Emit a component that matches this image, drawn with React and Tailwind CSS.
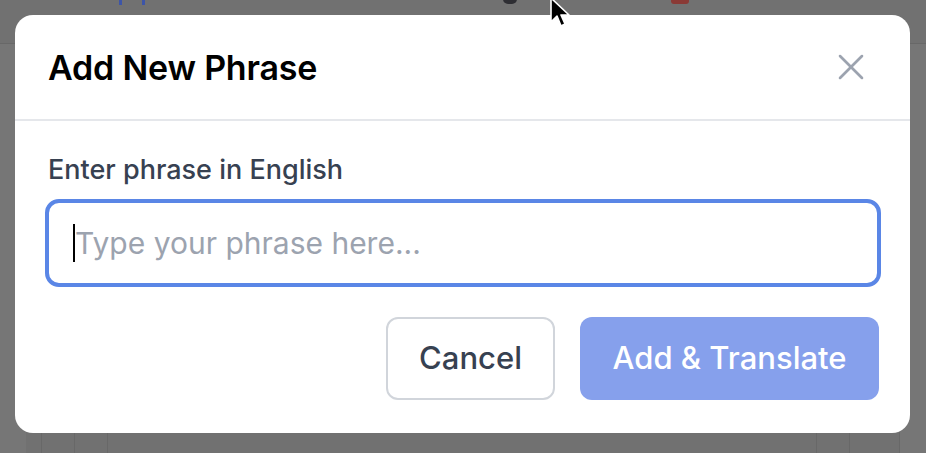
import React from 'react';
import { X } from 'lucide-react';

function Backdrop() {
  // faint page behind the overlay
  return (
    <div className="absolute inset-0 flex flex-col">
      <div className="h-[44px] border-b border-[#686868] relative">
        <div className="absolute left-[119px] top-0 w-[3px] h-[5px] bg-[#3d55a8]" />
        <div className="absolute left-[142px] top-0 w-[3px] h-[5px] bg-[#3d55a8]" />
        <div className="absolute left-[503px] -top-[6px] w-[14px] h-[10px] rounded-full bg-[#2e2e33]" />
        <div className="absolute left-[671px] -top-[4px] w-[18px] h-[8px] rounded-[3px] bg-[#8a3a36]" />
      </div>
      <div className="flex-1 flex">
        <div className="w-[26px] bg-[#767676]" />
        <div className="w-[16px] border-r border-[#686868]" />
        <div className="w-[33px] border-r border-[#686868]" />
        <div className="w-[33px] border-r border-[#686868]" />
        <div className="flex-1 border-r border-[#686868]" />
        <div className="w-[33px] border-r border-[#686868]" />
        <div className="w-[50px] border-r border-[#686868]" />
        <div className="w-[26px] bg-[#767676]" />
      </div>
    </div>
  );
}

function Pointer() {
  return (
    <svg className="absolute left-[548px] -top-[4px]" width="26" height="34" viewBox="0 0 26 34">
      <path d="M3 2 L3 26 L9 20 L13 30 L17 28 L13 19 L21 19 Z" fill="#000" stroke="#fff" strokeWidth="1.6" strokeLinejoin="round" />
    </svg>
  );
}

export default function App() {
  return (
    <div
      className="relative w-[926px] h-[453px] overflow-hidden bg-[#717171]"
      style={{ fontFamily: 'Inter, "Noto Sans", sans-serif' }}
    >
      <Backdrop />

      {/* Modal */}
      <div className="absolute left-[15px] top-[15px] w-[895px] h-[418px] bg-white rounded-[18px] flex flex-col">
        <div className="h-[106px] flex items-center justify-between pl-[33px] pr-[37px] border-b-2 border-[#e5e7eb]">
          <h2 className="text-[34px] font-semibold text-black tracking-[-0.2px]">Add New Phrase</h2>
          <button className="text-[#9ca3af]">
            <X size={44} strokeWidth={1.4} />
          </button>
        </div>

        <div className="pl-[30px] pr-[29px] pt-[32px]">
          <label className="block pl-[3px] text-[27px] leading-[34px] font-medium text-[#374151]">
            Enter phrase in English
          </label>
          <div className="mt-[12px] h-[88px] border-[4px] border-[#5a86e6] rounded-[14px] flex items-center pl-[24px]">
            <span className="w-[2px] h-[38px] bg-black" />
            <input
              className="flex-1 bg-transparent outline-none caret-transparent text-[30px] text-[#111827] placeholder:text-[#9ca3af]"
              placeholder="Type your phrase here..."
            />
          </div>

          <div className="mt-[30px] flex justify-end gap-[25px] pr-[2px]">
            <button className="w-[169px] h-[83px] border-2 border-[#d1d5db] rounded-[12px] text-[31px] font-medium text-[#374151]">
              Cancel
            </button>
            <button className="w-[299px] h-[83px] bg-[#86a0ec] rounded-[12px] text-[31px] font-medium text-white">
              Add &amp; Translate
            </button>
          </div>
        </div>
      </div>

      <Pointer />
    </div>
  );
}
